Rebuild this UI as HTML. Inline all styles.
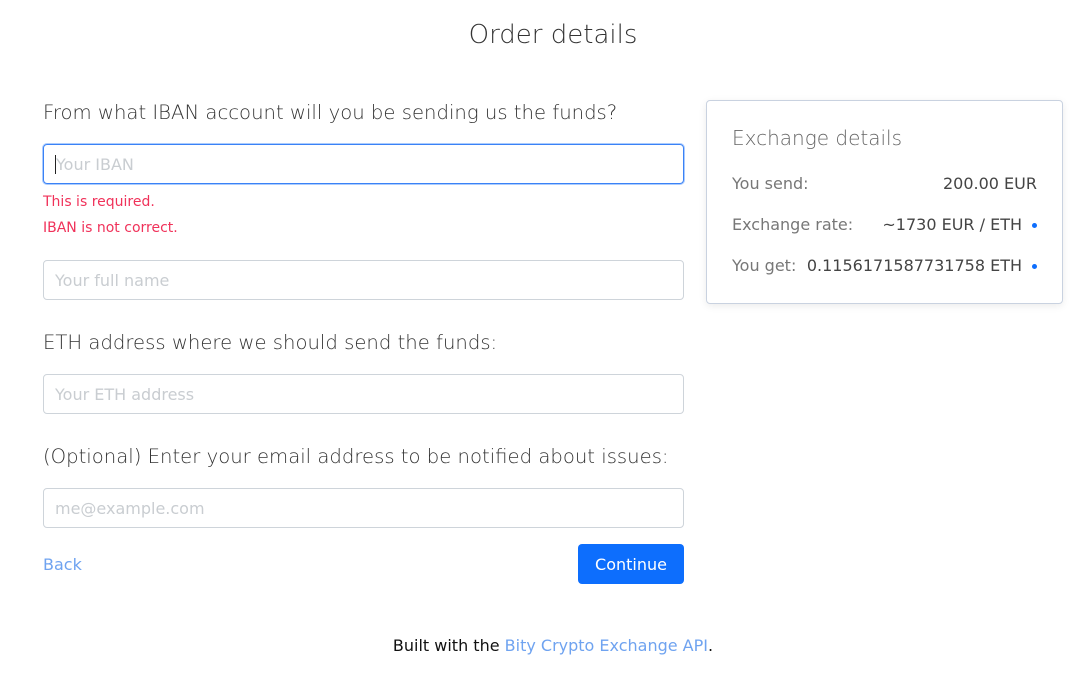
<!DOCTYPE html>
<html><head><style>
*{box-sizing:border-box;margin:0;padding:0}
body{width:1089px;height:693px;background:#fff;font-family:"DejaVu Sans","Liberation Sans",sans-serif;color:#212529;position:relative;overflow:hidden}
.a{position:absolute;white-space:nowrap}
h1{position:absolute;top:20px;left:0;width:1106px;text-align:center;font-weight:300;font-size:26px;color:#333}
.q{font-size:19.65px;font-weight:300;color:#333;left:43px}
.in{position:absolute;left:43px;width:641px;height:40px;border:1px solid #ced4da;border-radius:4px;font-size:16px;color:#c9cdd1;padding:10px 11px 8px}
.err{color:#f0325a;font-size:14px;left:43px}
.card{position:absolute;left:706px;top:100px;width:357px;height:204px;border:1px solid #c9d2e0;border-radius:4px;box-shadow:0 2px 8px rgba(0,0,0,.08)}
.r{font-size:16px;color:#777}
.v{font-size:16px;color:#444;text-align:right}
.dot{position:absolute;width:5px;height:5px;border-radius:50%;background:#0d6efd}
</style></head><body>
<h1>Order details</h1>
<div class="a q" style="top:101px">From what IBAN account will you be sending us the funds?</div>
<div class="in" style="top:144px;border:1px solid #3b82f6;box-shadow:0 0 0 1px rgba(13,110,253,.35)"><span style="border-left:1px solid #222;color:#c9cdd1">Your IBAN</span></div>
<div class="a err" style="top:194px">This is required.</div>
<div class="a err" style="top:220px">IBAN is not correct.</div>
<div class="in" style="top:260px">Your full name</div>
<div class="a q" style="top:331px">ETH address where we should send the funds:</div>
<div class="in" style="top:374px">Your ETH address</div>
<div class="a q" style="top:445px">(Optional) Enter your email address to be notified about issues:</div>
<div class="in" style="top:488px">me@example.com</div>
<div class="a" style="left:43px;top:555px;font-size:16px;color:#6fa3f0">Back</div>
<div class="a" style="left:578px;top:544px;width:106px;height:40px;background:#0d6efd;border-radius:4px;color:#fff;font-size:16px;text-align:center;line-height:41px">Continue</div>
<div class="a" style="left:0;width:1106px;text-align:center;top:636px;font-size:16px;color:#111">Built with the <span style="color:#6fa3f0">Bity Crypto Exchange API</span>.</div>
<div class="card">
<div class="a" style="left:25px;top:25px;font-size:20px;font-weight:300;color:#666">Exchange details</div>
<div class="a r" style="left:25px;top:73px">You send:</div>
<div class="a v" style="right:25px;top:73px">200.00 EUR</div>
<div class="a r" style="left:25px;top:114px">Exchange rate:</div>
<div class="a v" style="right:40px;top:114px">~1730 EUR / ETH</div>
<div class="dot" style="left:325px;top:122px"></div>
<div class="a r" style="left:25px;top:155px">You get:</div>
<div class="a v" style="right:40px;top:155px">0.1156171587731758 ETH</div>
<div class="dot" style="left:325px;top:163px"></div>
</div>
</body></html>
